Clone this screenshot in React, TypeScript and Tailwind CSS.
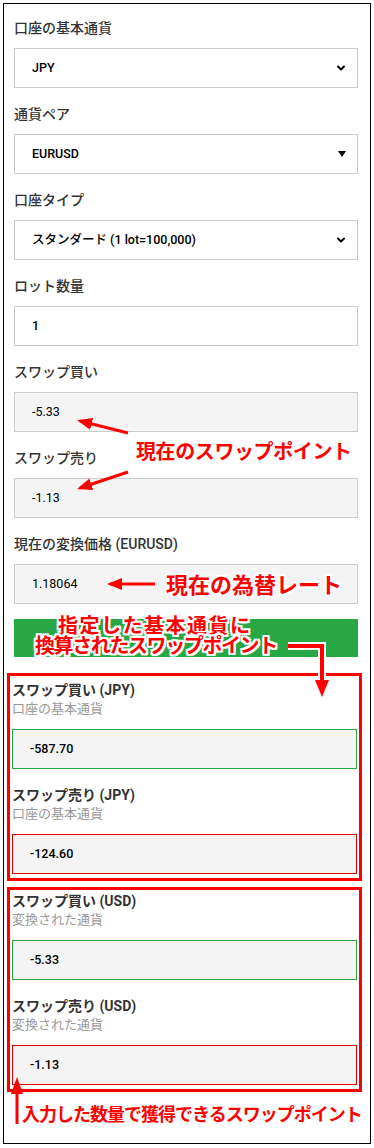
import { ChevronDown } from "lucide-react";

const font = "font-['Roboto','Noto_Sans_CJK_JP',sans-serif]";
const note =
  "absolute whitespace-nowrap leading-none font-bold text-[#ff0000] font-['Noto_Sans_CJK_JP',sans-serif] [text-shadow:2px_0_#fff,-2px_0_#fff,0_2px_#fff,0_-2px_#fff,2px_2px_#fff,-2px_-2px_#fff,2px_-2px_#fff,-2px_2px_#fff]";

// 上部の入力欄
const Field = ({
  label,
  value,
  kind,
}: {
  label: string;
  value: string;
  kind: "chevron" | "caret" | "input" | "readonly";
}) => (
  <div className="mb-[16px]">
    <div className="h-[20px] leading-[20px] text-[14px] font-medium text-[#333]">{label}</div>
    <div
      className={`mt-[10px] h-[40px] flex items-center justify-between pl-[17px] pr-[10px] border border-[#cccccc] text-[12.5px] text-black ${
        kind === "readonly" ? "bg-[#f4f4f4]" : "bg-white font-medium"
      }`}
    >
      <span>{value}</span>
      {kind === "chevron" && <ChevronDown size={12} strokeWidth={4} className="text-black" />}
      {kind === "caret" && (
        <svg width="8" height="6" viewBox="0 0 8 6" className="mr-[1px]">
          <polygon points="0,0 8,0 4,6" fill="#000" />
        </svg>
      )}
    </div>
  </div>
);

// 換算結果の欄
const Result = ({
  label,
  sub,
  value,
  color,
  last,
}: {
  label: string;
  sub: string;
  value: string;
  color: string;
  last?: boolean;
}) => (
  <div className={last ? "" : "mb-[16px]"}>
    <div className="h-[20px] leading-[20px] text-[14px] font-bold text-[#333]">{label}</div>
    <div className="h-[18px] leading-[18px] text-[13px] text-[#999]">{sub}</div>
    <div
      className={`mt-[11px] h-[40px] flex items-center pl-[17px] bg-[#f4f4f4] border text-[12.5px] font-medium text-black ${color}`}
    >
      {value}
    </div>
  </div>
);

export default function App() {
  return (
    <div className={`relative w-[374px] h-[1148px] bg-white pt-[3px] pl-[3px] ${font}`}>
      <div className="w-[368px] h-[1141px] border border-black">
        <div className="ml-[10px] w-[344px] pt-[14px]">
          <Field label="口座の基本通貨" value="JPY" kind="chevron" />
          <Field label="通貨ペア" value="EURUSD" kind="caret" />
          <Field label="口座タイプ" value="スタンダード (1 lot=100,000)" kind="chevron" />
          <Field label="ロット数量" value="1" kind="input" />
          <Field label="スワップ買い" value="-5.33" kind="readonly" />
          <Field label="スワップ売り" value="-1.13" kind="readonly" />
          <Field label="現在の変換価格 (EURUSD)" value="1.18064" kind="readonly" />
          <div className="-mt-px h-[38px] bg-[#28a745]" />
        </div>

        <div className="ml-[3px] mt-[16px] w-[355px] border-[3px] border-[#ff0000] px-[2px] pt-[4px] pb-[4px]">
          <Result label="スワップ買い (JPY)" sub="口座の基本通貨" value="-587.70" color="border-[#28a745]" />
          <Result label="スワップ売り (JPY)" sub="口座の基本通貨" value="-124.60" color="border-[#e00000]" last />
        </div>

        <div className="ml-[3px] mt-[6px] w-[355px] border-[3px] border-[#ff0000] px-[2px] pt-[1px] pb-[4px]">
          <Result label="スワップ買い (USD)" sub="変換された通貨" value="-5.33" color="border-[#28a745]" />
          <Result label="スワップ売り (USD)" sub="変換された通貨" value="-1.13" color="border-[#e00000]" last />
        </div>
      </div>

      {/* 注釈 */}
      <svg className="absolute left-0 top-0 pointer-events-none" width="374" height="1148">
        <defs>
          <marker id="head" markerWidth="5" markerHeight="4" refX="4" refY="2" orient="auto">
            <polygon points="0,0 5,2 0,4" fill="#ff0000" />
          </marker>
        </defs>
        <line x1="128" y1="433" x2="80" y2="421" stroke="#ff0000" strokeWidth="3" markerEnd="url(#head)" />
        <line x1="128" y1="472" x2="80" y2="488" stroke="#ff0000" strokeWidth="3" markerEnd="url(#head)" />
        <line x1="155" y1="584" x2="110" y2="584" stroke="#ff0000" strokeWidth="3" markerEnd="url(#head)" />
        <path d="M288 646 H322 V682" fill="none" stroke="#fff" strokeWidth="8" />
        <path d="M288 646 H322 V682" fill="none" stroke="#ff0000" strokeWidth="4" />
        <polygon points="315,680 329,680 322,697" fill="#ff0000" />
        <line x1="17" y1="1124" x2="17" y2="1092" stroke="#ff0000" strokeWidth="3" />
        <polygon points="11,1094 23,1094 17,1077" fill="#ff0000" />
      </svg>

      <div className={`${note} left-[136px] top-[441px] text-[20px] tracking-[-0.4px]`}>現在のスワップポイント</div>
      <div className={`${note} left-[166px] top-[572px] text-[22px]`}>現在の為替レート</div>
      <div className={`${note} left-[35px] top-[615px] text-[20px] leading-[23px]`}>
        <span className="block pl-[23px] tracking-[1.5px]">指定した基本通貨に</span>
        <span className="block tracking-[-1.4px]">換算されたスワップポイント</span>
      </div>
      <div className={`${note} left-[22px] top-[1104px] text-[18px] tracking-[-1px]`}>入力した数量で獲得できるスワップポイント</div>
    </div>
  );
}
